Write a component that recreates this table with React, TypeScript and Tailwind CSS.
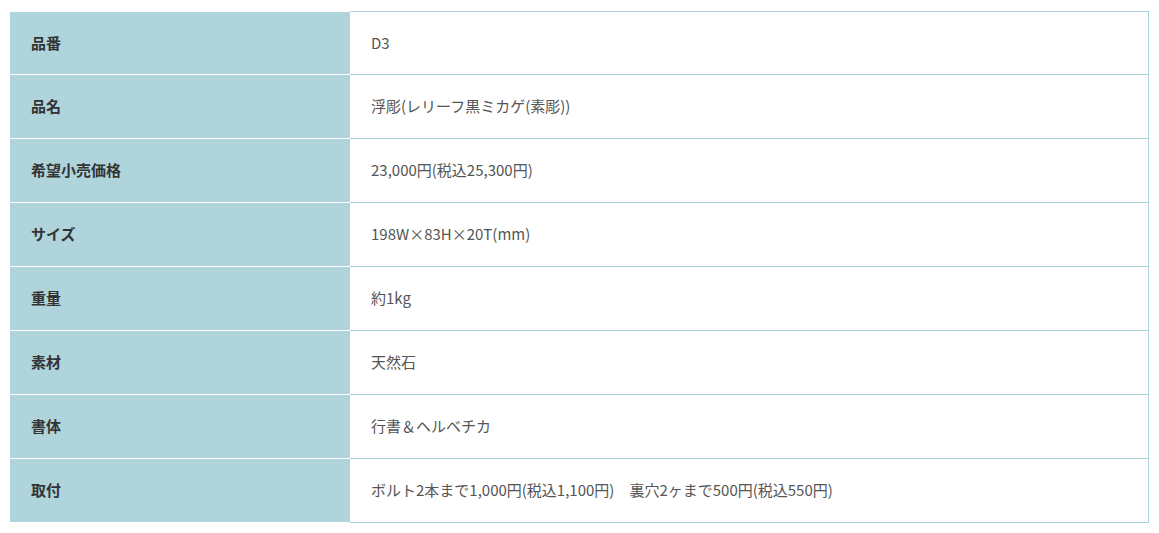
import React from 'react';

const rows: [string, string][] = [
  ['品番', 'D3'],
  ['品名', '浮彫(レリーフ黒ミカゲ(素彫))'],
  ['希望小売価格', '23,000円(税込25,300円)'],
  ['サイズ', '198W×83H×20T(mm)'],
  ['重量', '約1kg'],
  ['素材', '天然石'],
  ['書体', '行書＆ヘルベチカ'],
  ['取付', 'ボルト2本まで1,000円(税込1,100円)　裏穴2ヶまで500円(税込550円)'],
];

export default function App() {
  return (
    <div className="min-h-screen bg-white px-[10px] pt-[11px] font-['Noto_Sans_CJK_JP','Noto_Sans',sans-serif] text-[15px]">
      <table className="w-full border-separate border-spacing-0">
        <tbody>
          {rows.map(([label, value], i) => (
            <tr key={label}>
              <th
                className={`w-[340px] h-[64px] bg-[#b0d4dc] border-b border-white pl-[21px] text-left align-middle font-bold text-[#333] ${i === 0 ? 'border-t' : ''}`}
              >
                {label}
              </th>
              <td
                className={`h-[64px] border-b border-r border-[#a9d3dc] pl-[21px] align-middle text-[#555] ${i === 0 ? 'border-t' : ''}`}
              >
                {value}
              </td>
            </tr>
          ))}
        </tbody>
      </table>
    </div>
  );
}
